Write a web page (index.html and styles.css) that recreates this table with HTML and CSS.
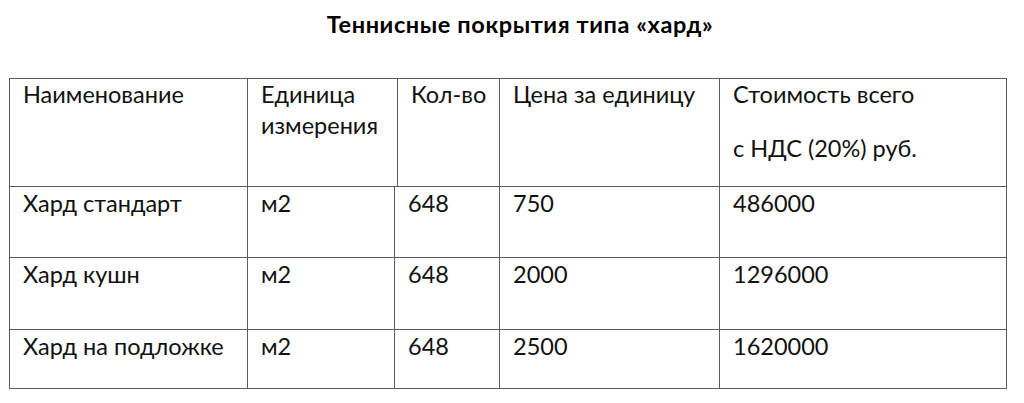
FILE: index.html
```html
<!DOCTYPE html>
<html lang="ru">
<head>
<meta charset="utf-8">
<title>Теннисные покрытия типа «хард»</title>
<link rel="stylesheet" href="styles.css">
</head>
<body>
<h1 class="title">Теннисные покрытия типа «хард»</h1>
<div class="table">
  <div class="row head">
    <div class="cell">Наименование</div>
    <div class="cell">Единица измерения</div>
    <div class="cell">Кол-во</div>
    <div class="cell">Цена за единицу</div>
    <div class="cell"><p>Стоимость всего</p><p class="sub">с НДС (20%) руб.</p></div>
  </div>
  <div class="row body r1">
    <div class="cell">Хард стандарт</div>
    <div class="cell">м2</div>
    <div class="cell">648</div>
    <div class="cell">750</div>
    <div class="cell">486000</div>
  </div>
  <div class="row body r2">
    <div class="cell">Хард кушн</div>
    <div class="cell">м2</div>
    <div class="cell">648</div>
    <div class="cell">2000</div>
    <div class="cell">1296000</div>
  </div>
  <div class="row body r3">
    <div class="cell">Хард на подложке</div>
    <div class="cell">м2</div>
    <div class="cell">648</div>
    <div class="cell">2500</div>
    <div class="cell">1620000</div>
  </div>
</div>
</body>
</html>
```
FILE: styles.css
```css
html, body {
  margin: 0;
  padding: 0;
  background: #ffffff;
}
body {
  font-family: Lato, "Liberation Sans", sans-serif;
  font-size: 23.5px;
  color: #111111;
  line-height: 31px;
}
.title {
  margin: 9px 0 0 0;
  padding-left: 16px;
  font-size: 23.5px;
  font-weight: 700;
  line-height: 31px;
  letter-spacing: 0.6px;
  text-align: center;
  color: #000000;
}
.table {
  margin: 38px 0 0 9px;
  width: 998px;
  border-left: 1px solid #5c5c5c;
  border-top: 1px solid #5c5c5c;
  box-sizing: border-box;
}
.row {
  display: grid;
}
.head {
  grid-template-columns: 238px 150px 102px 220px 287px;
  height: 108px;
}
.body {
  grid-template-columns: 238px 147px 105px 220px 287px;
}
.r1 { height: 71px; }
.r2 { height: 72px; }
.r3 { height: 59px; }
.cell {
  border-right: 1px solid #5c5c5c;
  border-bottom: 1px solid #5c5c5c;
  padding: 0 6px 0 13px;
  box-sizing: border-box;
  overflow: hidden;
}
.body .cell {
  padding-top: 1px;
}
.cell p {
  margin: 0;
}
.cell .sub {
  margin-top: 23px;
}
```
